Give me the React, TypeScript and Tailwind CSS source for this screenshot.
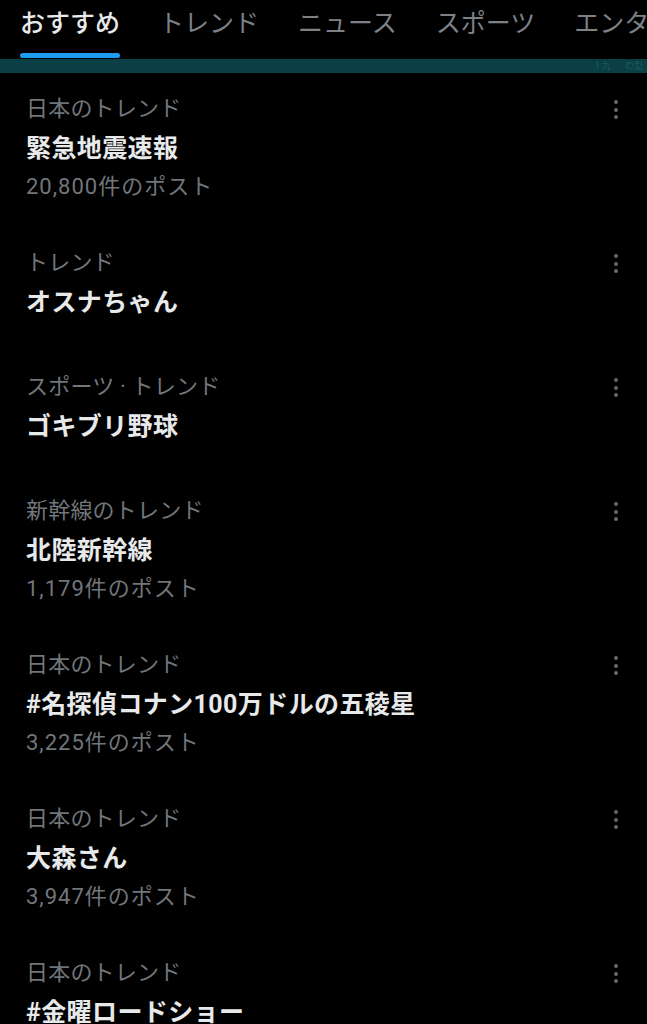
import React from "react";

type Trend = { cat: string; title: string; count?: string };

const trends: Trend[] = [
  { cat: "日本のトレンド", title: "緊急地震速報", count: "20,800件のポスト" },
  { cat: "トレンド", title: "オスナちゃん" },
  { cat: "スポーツ · トレンド", title: "ゴキブリ野球" },
  { cat: "新幹線のトレンド", title: "北陸新幹線", count: "1,179件のポスト" },
  { cat: "日本のトレンド", title: "#名探偵コナン100万ドルの五稜星", count: "3,225件のポスト" },
  { cat: "日本のトレンド", title: "大森さん", count: "3,947件のポスト" },
  { cat: "日本のトレンド", title: "#金曜ロードショー" },
];

function Dots() {
  return (
    <div className="flex flex-col items-center gap-[3.5px] pt-[11px]">
      <span className="block h-[4px] w-[4px] rounded-full bg-[#66696d]" />
      <span className="block h-[4px] w-[4px] rounded-full bg-[#66696d]" />
      <span className="block h-[4px] w-[4px] rounded-full bg-[#66696d]" />
    </div>
  );
}

export default function App() {
  const font = { fontFamily: 'Roboto, "Noto Sans CJK JP", "Noto Sans", sans-serif' };
  return (
    <div className="h-[1024px] w-[647px] overflow-hidden bg-black" style={font}>
      <div className="flex h-[59px] gap-[39px] overflow-hidden whitespace-nowrap pl-[20px]">
        {["おすすめ", "トレンド", "ニュース", "スポーツ", "エンタメ"].map((t, i) => (
          <div key={t} className="flex shrink-0 flex-col">
            <div
              className={`h-[53px] pt-[6px] text-[25px] leading-[36px] ${
                i === 0 ? "font-medium text-[#e7e9ea]" : "text-[#7d8186]"
              }`}
            >
              {t}
            </div>
            {i === 0 && <div className="h-[5px] w-full rounded-full bg-[#1d9bf0]" />}
          </div>
        ))}
      </div>
      <div className="flex h-[14px] items-center justify-end gap-[14px] bg-[#0a3f45] pr-[4px] text-[9px] leading-none text-[#1f5a60]">
        <span>1 九</span>
        <span>の型</span>
      </div>
      <div className="flex flex-col">
        {trends.map((t, i) => (
          <div
            key={i}
            className={`flex pl-[26px] pr-[29px] pt-[16px] ${t.count ? "pb-[22px]" : "pb-[28px]"}`}
          >
            <div className="flex flex-1 flex-col">
              <div className="h-[40px] text-[22px] leading-[40px] tracking-[0.2px] text-[#71767b]">
                {t.cat}
              </div>
              <div className="h-[40px] text-[25px] font-bold leading-[40px] tracking-[0.4px] text-[#e7e9ea]">
                {t.title}
              </div>
              {t.count && (
                <div className="h-[36px] text-[22px] leading-[36px] tracking-[1px] text-[#71767b]">
                  {t.count}
                </div>
              )}
            </div>
            <Dots />
          </div>
        ))}
      </div>
    </div>
  );
}
